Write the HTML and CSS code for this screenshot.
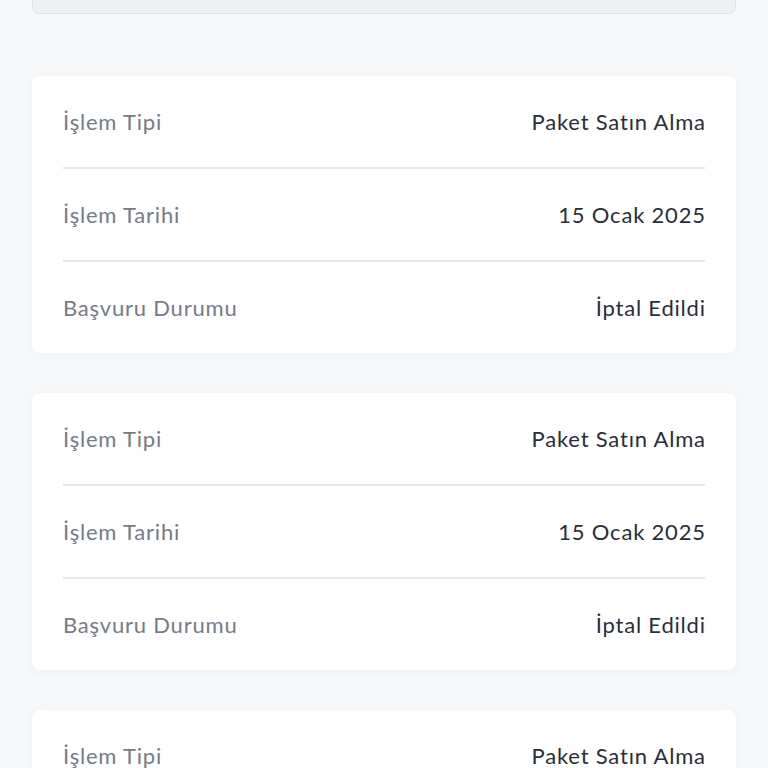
FILE: index.html
```html
<!DOCTYPE html>
<html lang="tr">
<head>
    <meta charset="UTF-8">
    <meta name="viewport" content="width=device-width, initial-scale=1.0">
    <title>İşlem Geçmişi</title>
    <link rel="stylesheet" href="styles.css">
</head>
<body>

    <div class="page">
        <div class="filter-box"></div>

        <div class="history-card">
            <div class="history-row">
                <span class="row-label">İşlem Tipi</span>
                <span class="row-value">Paket Satın Alma</span>
            </div>
            <div class="history-row">
                <span class="row-label">İşlem Tarihi</span>
                <span class="row-value">15 Ocak 2025</span>
            </div>
            <div class="history-row">
                <span class="row-label">Başvuru Durumu</span>
                <span class="row-value">İptal Edildi</span>
            </div>
        </div>

        <div class="history-card">
            <div class="history-row">
                <span class="row-label">İşlem Tipi</span>
                <span class="row-value">Paket Satın Alma</span>
            </div>
            <div class="history-row">
                <span class="row-label">İşlem Tarihi</span>
                <span class="row-value">15 Ocak 2025</span>
            </div>
            <div class="history-row">
                <span class="row-label">Başvuru Durumu</span>
                <span class="row-value">İptal Edildi</span>
            </div>
        </div>

        <div class="history-card">
            <div class="history-row">
                <span class="row-label">İşlem Tipi</span>
                <span class="row-value">Paket Satın Alma</span>
            </div>
            <div class="history-row">
                <span class="row-label">İşlem Tarihi</span>
                <span class="row-value">15 Ocak 2025</span>
            </div>
            <div class="history-row">
                <span class="row-label">Başvuru Durumu</span>
                <span class="row-value">İptal Edildi</span>
            </div>
        </div>
    </div>

</body>
</html>
```

FILE: styles.css
```css
body {
    font-family: Lato, "Open Sans", sans-serif;
    background-color: #f7f8fa;
    margin: 0;
    padding: 0;
}

.page {
    padding: 0 32px 40px;
    display: flex;
    flex-direction: column;
    gap: 40px;
}

.filter-box {
    height: 13px;
    background-color: #eff0f4;
    border: 1px solid #dfe1e6;
    border-top: none;
    border-radius: 0 0 8px 8px;
    margin-bottom: 22px;
}

.history-card {
    background-color: #fff;
    border-radius: 8px;
    box-shadow: 0 2px 10px rgba(30, 40, 60, 0.04);
    padding: 0 31px;
}

.history-row {
    display: flex;
    justify-content: space-between;
    align-items: center;
    height: 91px;
    font-size: 22px;
    letter-spacing: 0.8px;
}

.history-row + .history-row {
    border-top: 2px solid #e6e8ec;
}

.row-label {
    color: #757b88;
}

.row-value {
    margin-right: -0.8px;
    color: #2a2e3c;
}
```
